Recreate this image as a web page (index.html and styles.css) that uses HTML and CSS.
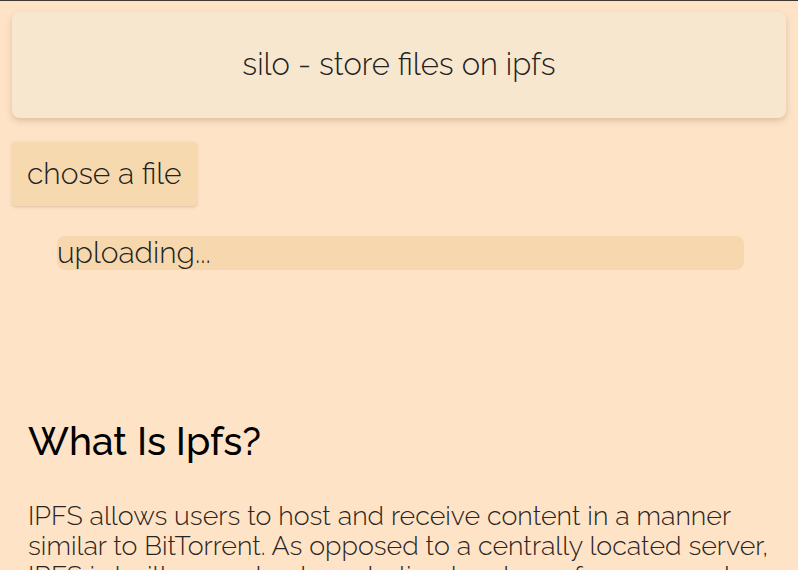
FILE: index.html
```html
<!DOCTYPE html>
<html lang="en">
<head>
    <meta charset="UTF-8">
    <meta name="viewport" content="width=device-width, initial-scale=1.0">
    <title>silo - store files on ipfs</title>
    <link rel="stylesheet" href="styles.css">
</head>
<body>
    <header class="title-card">
        <h1>silo - store files on ipfs</h1>
    </header>
    <div class="upload">
        <label class="file-button" for="fileInput">chose a file</label>
        <input type="file" id="fileInput" class="file-input">
    </div>
    <div class="progress">
        <div class="progress-bar">uploading...</div>
    </div>
    <section class="about">
        <h2>What Is Ipfs?</h2>
        <p>IPFS allows users to host and receive content in a manner similar to BitTorrent. As opposed to a centrally located server, IPFS is built around a decentralized system of <span class="nowrap">user-operators</span> who hold a portion of the overall data.</p>
    </section>
</body>
</html>
```
FILE: styles.css
```css
html {
    border-top: 1px solid #3d3832;
}
body {
    font-family: 'Raleway', 'Lato', sans-serif;
    font-weight: 300;
    margin: 0;
    padding: 11px 12px 0 12px;
    background-color: #fee3c7;
    color: #222;
}
.title-card {
    background: #f8e7cf;
    border-radius: 8px;
    box-shadow: 0 3px 6px rgba(120, 90, 50, 0.25);
    height: 106px;
    display: flex;
    justify-content: center;
    align-items: center;
}
.title-card h1 {
    margin: 0 0 2px;
    font-size: 31px;
    font-weight: 300;
}
.upload {
    margin-top: 24px;
}
.file-button {
    display: inline-block;
    background: #f7d9af;
    border-radius: 4px;
    box-shadow: 0 1px 3px rgba(120, 90, 50, 0.25);
    padding: 12px 15px;
    font-size: 30px;
    line-height: 40px;
    cursor: pointer;
}
.file-input {
    display: none;
}
.progress {
    margin: 30px 42px 0 45px;
}
.progress-bar {
    background: #f7d8ae;
    border-radius: 8px;
    height: 34px;
    font-size: 30px;
    line-height: 34px;
}
.about {
    padding: 0 15px 0 16px;
    margin-top: 148px;
}
.about h2 {
    margin: 0;
    font-size: 39px;
    font-weight: 500;
    color: #000;
}
.about p {
    margin: 37px 0 0;
    font-size: 26.8px;
    line-height: 30px;
    font-weight: 300;
    color: #2a2520;
}
.nowrap {
    white-space: nowrap;
}
```
